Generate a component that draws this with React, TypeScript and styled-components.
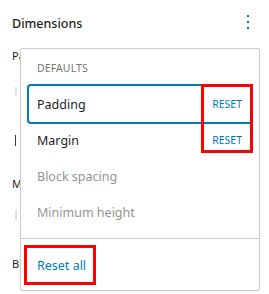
import React from "react";
import styled, { createGlobalStyle } from "styled-components";

const Global = createGlobalStyle`
  html, body { margin: 0; padding: 0; background: #fff; }
  body { font-family: "Noto Sans", "Open Sans", sans-serif; color: #1e1e1e; }
  * { box-sizing: border-box; }
`;

const Page = styled.div`
  position: relative;
  width: 269px;
  height: 294px;
  overflow: hidden;
  background: #fff;
`;

const Header = styled.div`
  display: flex;
  align-items: flex-start;
  justify-content: space-between;
  padding: 10px 9px 0 12px;
`;

const Title = styled.h2`
  margin: 0;
  padding-top: 4px;
  font-size: 12.5px;
  line-height: 20px;
  font-weight: 500;
  color: #1e1e1e;
`;

const IconButton = styled.button`
  display: flex;
  width: 24px;
  height: 24px;
  padding: 0;
  border: 0;
  background: none;
  color: #007cba;
`;

const BgBody = styled.div`
  display: flex;
  flex-direction: column;
  align-items: flex-start;
  padding-left: 12px;
`;

const BgLabel = styled.div<{ $top: number }>`
  margin-top: ${(p) => p.$top}px;
  white-space: nowrap;
  font-size: 11px;
  line-height: 16px;
  color: #1e1e1e;
`;

const BgBar = styled.div<{ $top: number; $h: number; $dark?: boolean }>`
  margin-top: ${(p) => p.$top}px;
  margin-left: 3px;
  width: ${(p) => (p.$dark ? 1 : 2)}px;
  height: ${(p) => p.$h}px;
  background: ${(p) => (p.$dark ? "#3c3c3c" : "#e0e0e0")};
`;

const Menu = styled.div`
  position: absolute;
  left: 20px;
  top: 48px;
  width: 240px;
  height: 243px;
  display: flex;
  flex-direction: column;
  background: #fff;
  border: 1px solid #ccc;
  border-radius: 2px;
  box-shadow: 0 1px 2px rgba(0, 0, 0, 0.08);
`;

const Group = styled.div<{ $sep?: boolean }>`
  display: flex;
  flex-direction: column;
  align-items: stretch;
  padding: 8px;
  border-top: ${(p) => (p.$sep ? "1px solid #ccc" : "0")};
`;

const GroupLabel = styled.div`
  height: 29px;
  padding: 3px 8px 0;
  font-size: 10.5px;
  line-height: 16px;
  font-weight: 400;
  letter-spacing: 0.1px;
  text-transform: uppercase;
  color: #757575;
`;

const Item = styled.div<{ $focus?: boolean; $muted?: boolean }>`
  display: flex;
  align-items: center;
  justify-content: space-between;
  height: 36px;
  padding: 0 9px 0 8px;
  border-radius: 2px;
  font-size: 12.5px;
  color: ${(p) => (p.$muted ? "#949494" : "#1e1e1e")};
  box-shadow: ${(p) => (p.$focus ? "0 0 0 2px #007cba" : "none")};
`;

const ResetTag = styled.span`
  font-size: 10.5px;
  font-weight: 400;
  text-transform: uppercase;
  color: #007cba;
`;

const ResetAll = styled.button`
  align-self: flex-start;
  height: 36px;
  margin-left: -3px;
  padding: 0 8px 0 11px;
  border: 0;
  background: none;
  font-family: inherit;
  font-size: 12.5px;
  color: #007cba;
  outline: 3px solid #f00;
  outline-offset: -1px;
`;

const Highlight = styled.div`
  position: absolute;
  left: 180px;
  top: 35px;
  width: 52px;
  height: 69px;
  border: 3px solid #f00;
  pointer-events: none;
`;

export default function App() {
  return (
    <Page>
      <Global />
      <Header>
        <Title>Dimensions</Title>
        <IconButton aria-label="View options">
          <svg width="24" height="24" viewBox="0 0 24 24" fill="currentColor">
            <path d="M13 19h-2v-2h2v2zm0-6h-2v-2h2v2zm0-6h-2V5h2v2z" />
          </svg>
        </IconButton>
      </Header>
      <BgBody>
        <BgLabel $top={14}>Padding</BgLabel>
        <BgBar $top={23} $h={8} />
        <BgBar $top={40} $h={11} $dark />
        <BgLabel $top={30}>Margin</BgLabel>
        <BgBar $top={18} $h={10} />
        <BgLabel $top={36}>Block spacing</BgLabel>
      </BgBody>
      <Menu>
        <Group>
          <GroupLabel>Defaults</GroupLabel>
          <Item $focus>
            Padding
            <ResetTag>Reset</ResetTag>
          </Item>
          <Item>
            Margin
            <ResetTag>Reset</ResetTag>
          </Item>
          <Item $muted>Block spacing</Item>
          <Item $muted>Minimum height</Item>
        </Group>
        <Group $sep>
          <ResetAll>Reset all</ResetAll>
        </Group>
        <Highlight />
      </Menu>
    </Page>
  );
}
